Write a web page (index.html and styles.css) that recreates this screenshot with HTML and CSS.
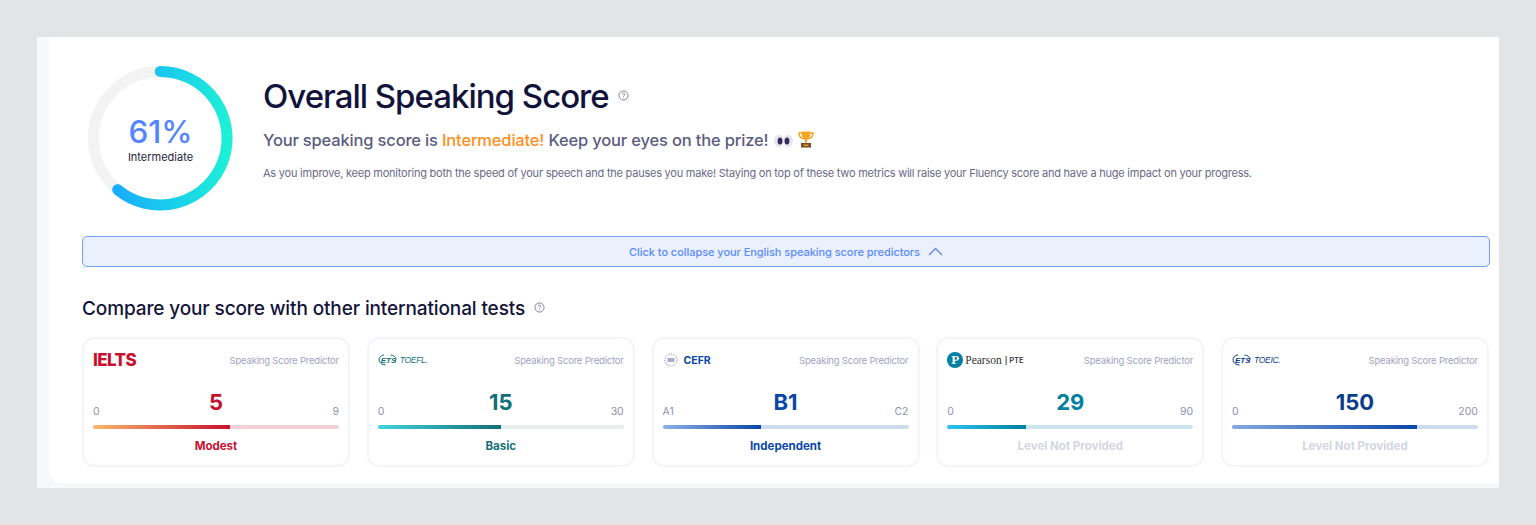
FILE: index.html
```html
<!DOCTYPE html>
<html lang="en">

<head>
  <meta charset="UTF-8">
  <meta name="viewport" content="width=device-width, initial-scale=1.0">
  <link rel="stylesheet" href="styles.css">
</head>

<body>
  <div class="frame">
    <div class="panel">

      <div class="hero">
        <div class="ring">
          <svg class="ring-svg" width="144.500" height="144.500" viewBox="0 0 145 145">
            <defs>
              <linearGradient id="ringGrad" gradientUnits="userSpaceOnUse" x1="25" y1="0" x2="145" y2="0">
                <stop offset="0" stop-color="#17abff" />
                <stop offset="1" stop-color="#1ef2d6" />
              </linearGradient>
            </defs>
            <circle cx="72.5" cy="72.5" r="67" fill="none" stroke="#f3f3f3" stroke-width="11" />
            <path d="M72.5 5.500 A67 67 0 1 1 29.800 124.100" fill="none" stroke="url(#ringGrad)" stroke-width="11" stroke-linecap="round" />
          </svg>
          <div class="ring-text">
            <div class="ring-value">61%</div>
            <div class="ring-label">Intermediate</div>
          </div>
        </div>
        <div class="hero-text">
          <h1 class="title">Overall Speaking Score<svg class="help help-title" viewBox="0 0 12 12"><circle cx="6" cy="6" r="5" /><path d="M4.600 4.800a1.400 1.400 0 1 1 2.200 1.100c-.5.4-.8.6-.8 1.200" /><circle class="dot" cx="6" cy="8.800" r=".5" /></svg></h1>
          <p class="subtitle">Your speaking score is <span class="level">Intermediate!</span> Keep your eyes on the prize!
            <svg class="emoji" width="19" height="14" viewBox="0 0 19 14">
              <ellipse cx="5" cy="7" rx="4.800" ry="6.200" fill="#e6e4ec" />
              <ellipse cx="14" cy="7" rx="4.800" ry="6.200" fill="#e6e4ec" />
              <ellipse cx="6" cy="7" rx="2.400" ry="3.600" fill="#3a2a5c" />
              <ellipse cx="13" cy="7" rx="2.400" ry="3.600" fill="#3a2a5c" />
            </svg>
            <svg class="emoji" width="16" height="17" viewBox="0 0 16 17">
              <path d="M1 2h14c0 3-1.500 5-4 5.500H5C2.500 7 1 5 1 2z" fill="none" stroke="#f0a020" stroke-width="1.400" />
              <path d="M3.500 .5h9c0 4-1 7-3.400 8v3H6.900v-3C4.500 7.500 3.500 4.500 3.500 .5z" fill="#f5a623" />
              <rect x="3" y="12" width="10" height="4.500" fill="#7a4a20" />
              <rect x="5.500" y="13.500" width="5" height="1.500" fill="#e0a040" />
            </svg>
          </p>
          <p class="desc">As you improve, keep monitoring both the speed of your speech and the pauses you make! Staying on top of these two metrics will raise your Fluency score and have a huge impact on your progress.</p>
        </div>
      </div>

      <div class="collapse-bar">
        <span>Click to collapse your English speaking score predictors</span>
        <svg class="chevron" width="15" height="9" viewBox="0 0 15 9"><path d="M1 8l6.500-6.500L14 8" /></svg>
      </div>

      <h2 class="compare-title">Compare your score with other international tests<svg class="help help-compare" viewBox="0 0 12 12"><circle cx="6" cy="6" r="5" /><path d="M4.600 4.800a1.400 1.400 0 1 1 2.200 1.100c-.5.4-.8.6-.8 1.200" /><circle class="dot" cx="6" cy="8.800" r=".5" /></svg></h2>

      <div class="cards">

        <div class="card ielts">
          <div class="card-top">
            <span class="logo-ielts">IELTS</span>
            <span class="predictor">Speaking Score Predictor</span>
          </div>
          <div class="score-row"><span>0</span><span class="score">5</span><span class="max">9</span></div>
          <div class="track"><div class="fill" style="width: 55.5%"></div></div>
          <div class="level-name">Modest</div>
        </div>

        <div class="card toefl">
          <div class="card-top">
            <span class="logo-ets">
              <svg width="20" height="14" viewBox="0 0 20 14"><path d="M6 1.800C2.500 2.500.8 4.800 1 7.200c.3 2.800 3 4.700 6.500 4.800M12.500 2c3 .3 5.200 1.800 5.400 3.800.1 1-.3 2-1.200 2.900" fill="none" stroke="#136f78" stroke-width="1" /></svg>
              <span class="ets-mark">ETS</span>
              <span class="ets-name">TOEFL.</span>
            </span>
            <span class="predictor">Speaking Score Predictor</span>
          </div>
          <div class="score-row"><span>0</span><span class="score">15</span><span class="max">30</span></div>
          <div class="track"><div class="fill" style="width: 50%"></div></div>
          <div class="level-name">Basic</div>
        </div>

        <div class="card cefr">
          <div class="card-top">
            <span class="logo-cefr">
              <svg width="14" height="14" viewBox="0 0 14 14">
                <circle cx="7" cy="7" r="6" fill="none" stroke="#8f95b5" stroke-width="1.200" stroke-dasharray="1 1.500" />
                <rect x="3.500" y="5" width="7" height="4" fill="#a9aecb" />
              </svg>
              <span>CEFR</span>
            </span>
            <span class="predictor">Speaking Score Predictor</span>
          </div>
          <div class="score-row"><span>A1</span><span class="score">B1</span><span class="max">C2</span></div>
          <div class="track"><div class="fill" style="width: 40%"></div></div>
          <div class="level-name">Independent</div>
        </div>

        <div class="card pte">
          <div class="card-top">
            <span class="logo-pearson">
              <span class="pearson-badge">P</span>
              <span class="pearson-name">Pearson</span>
              <span class="pearson-pte">| PTE</span>
            </span>
            <span class="predictor">Speaking Score Predictor</span>
          </div>
          <div class="score-row"><span>0</span><span class="score">29</span><span class="max">90</span></div>
          <div class="track"><div class="fill" style="width: 32%"></div></div>
          <div class="level-name none">Level Not Provided</div>
        </div>

        <div class="card toeic">
          <div class="card-top">
            <span class="logo-ets">
              <svg width="20" height="14" viewBox="0 0 20 14"><path d="M6 1.800C2.500 2.500.8 4.800 1 7.200c.3 2.800 3 4.700 6.500 4.800M12.500 2c3 .3 5.200 1.800 5.400 3.800.1 1-.3 2-1.200 2.900" fill="none" stroke="#0b3d8c" stroke-width="1" /></svg>
              <span class="ets-mark">ETS</span>
              <span class="ets-name">TOEIC.</span>
            </span>
            <span class="predictor">Speaking Score Predictor</span>
          </div>
          <div class="score-row"><span>0</span><span class="score">150</span><span class="max">200</span></div>
          <div class="track"><div class="fill" style="width: 75%"></div></div>
          <div class="level-name none">Level Not Provided</div>
        </div>

      </div>
    </div>
  </div>
</body>

</html>
```

FILE: styles.css
```css
* {
  box-sizing: border-box;
}

body {
  margin: 0;
  height: 525px;
  padding: 37px;
  background-color: #e3e4e6;
  font-family: "Inter", "Liberation Sans", sans-serif;
  overflow: hidden;
}

.frame {
  height: 451px;
  padding: 0 0 5px 12px;
  background-color: #f7f8fa;
}

.panel {
  height: 100%;
  padding: 29px 10px 0 33px;
  background-color: #fff;
  border-bottom-left-radius: 12px;
}

/* top section */
.hero {
  display: flex;
  height: 170px;
}

.ring {
  position: relative;
  width: 144px;
  height: 144px;
  margin-left: 6px;
  flex-shrink: 0;
}

.ring-svg {
  display: block;
}

.ring-text {
  position: absolute;
  inset: 0;
  display: flex;
  flex-direction: column;
  align-items: center;
  justify-content: center;
  padding-top: 1px;
  padding-left: 1px;
}

.ring-value {
  color: #5584ff;
  font-size: 31.500px;
  font-weight: 500;
  line-height: 36px;
}

.ring-label {
  color: #23233f;
  font-size: 11px;
  line-height: 14px;
}

.hero-text {
  margin-left: 31px;
  padding-top: 9px;
}

.title {
  margin: 0;
  color: #12123a;
  font-size: 33px;
  font-weight: 500;
  line-height: 42px;
  letter-spacing: -1px;
}

.help {
  fill: none;
  stroke: #77778f;
  stroke-width: 1;
}

.help .dot {
  fill: #77778f;
  stroke: none;
}

.help-title {
  width: 11px;
  height: 11px;
  margin-left: 9px;
  vertical-align: 7px;
}

.help-compare {
  width: 11px;
  height: 11px;
  margin-left: 9px;
  vertical-align: 2px;
}

.subtitle {
  margin: 11px 0 0;
  color: #5c5c80;
  font-size: 16.500px;
  font-weight: 500;
  line-height: 24px;
  letter-spacing: -0.17px;
}

.level {
  color: #ff8f1c;
}

.emoji {
  vertical-align: -2px;
  margin-left: 1px;
}

.desc {
  margin: 13px 0 0;
  color: #6a6a88;
  font-size: 11px;
  line-height: 16px;
  letter-spacing: -0.23px;
}

/* collapse button */
.collapse-bar {
  display: flex;
  align-items: center;
  justify-content: center;
  gap: 8px;
  height: 31px;
  margin-right: -1px;
  background-color: #eaf1fd;
  border: 1px solid #6ea2f5;
  border-radius: 5px;
  color: #5b8bff;
  font-size: 11px;
  font-weight: 500;
  letter-spacing: -0.05px;
}

.chevron {
  fill: none;
  stroke: #6f8fd8;
  stroke-width: 1.500;
}

.compare-title {
  margin: 29px 0 15px;
  color: #14143a;
  font-size: 19px;
  font-weight: 500;
  line-height: 26px;
  letter-spacing: -0.12px;
}

/* predictor cards */
.cards {
  display: grid;
  grid-template-columns: repeat(5, 1fr);
  gap: 16.750px;
}

.card {
  height: 130px;
  padding: 11px 9px;
  background-color: #fff;
  border: 2px solid #f4f4ff;
  border-radius: 12px;
}

.card-top {
  display: flex;
  align-items: center;
  justify-content: space-between;
  height: 20px;
}

.predictor {
  color: #a2a2c2;
  font-size: 9.500px;
  letter-spacing: -0.2px;
}

.score-row {
  display: grid;
  grid-template-columns: 1fr auto 1fr;
  align-items: end;
  margin-top: 19px;
  color: #9090b0;
  font-size: 10.500px;
  line-height: 14px;
}

.score {
  font-size: 22px;
  font-weight: 700;
  line-height: 26px;
  padding-bottom: 4px;
}

.max {
  text-align: right;
}

.track {
  height: 4px;
  margin-top: 6px;
  border-radius: 2px;
}

.fill {
  height: 100%;
  border-radius: 2px 0 0 2px;
}

.level-name {
  margin-top: 9px;
  font-size: 11.500px;
  font-weight: 700;
  line-height: 16px;
  text-align: center;
}

.level-name.none {
  color: #d5d5e4;
}

.ielts .score, .ielts .level-name { color: #c8102e; }
.ielts .track { background-color: #f5d0da; }
.ielts .fill { background: linear-gradient(90deg, #f9b96b, #c8102e); }

.toefl .score, .toefl .level-name { color: #136f78; }
.toefl .track { background-color: #e4eeef; }
.toefl .fill { background: linear-gradient(90deg, #3fd4dc, #136f78); }

.cefr .score, .cefr .level-name { color: #0a47a9; }
.cefr .track { background-color: #cedaee; }
.cefr .fill { background: linear-gradient(90deg, #8fb0e5, #0a47a9); }

.pte .score { color: #007fa3; }
.pte .track { background-color: #cce5ec; }
.pte .fill { background: linear-gradient(90deg, #2cc3ee, #007fa3); }

.toeic .score { color: #0b3d8c; }
.toeic .track { background-color: #cedaee; }
.toeic .fill { background: linear-gradient(90deg, #86a8e0, #0a47a9); }

/* logos */
.logo-ielts {
  color: #c8102e;
  font-size: 17px;
  font-weight: 800;
  letter-spacing: -0.6px;
}

.logo-ets {
  position: relative;
  display: flex;
  align-items: center;
  gap: 2px;
  font-family: "Liberation Sans", sans-serif;
  font-style: italic;
}

.ets-mark {
  position: absolute;
  left: 3px;
  top: 3px;
  font-size: 8px;
  font-weight: 700;
}

.ets-name {
  font-size: 8.500px;
  letter-spacing: -0.3px;
}

.toefl .logo-ets { color: #136f78; }
.toeic .logo-ets { color: #0b3d8c; }

.logo-cefr {
  display: flex;
  align-items: center;
  gap: 6px;
  margin-left: 1px;
  color: #0a47a9;
  font-size: 10.500px;
  font-weight: 700;
}

.logo-pearson {
  display: flex;
  align-items: center;
  color: #333;
}

.pearson-badge {
  display: flex;
  align-items: center;
  justify-content: center;
  width: 16px;
  height: 16px;
  margin-right: 2px;
  background-color: #007fa3;
  border-radius: 50%;
  color: #fff;
  font-family: "Liberation Serif", serif;
  font-size: 13px;
  font-weight: 700;
}

.pearson-name {
  font-family: "Liberation Serif", serif;
  font-size: 11.500px;
}

.pearson-pte {
  margin-left: 3px;
  font-size: 7.500px;
  font-weight: 600;
}
```
